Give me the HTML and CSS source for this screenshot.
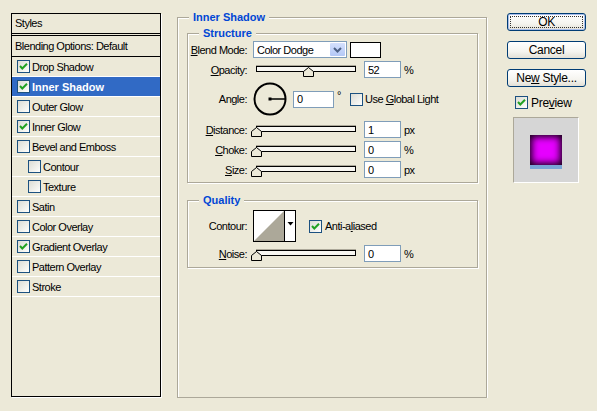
FILE: index.html
```html
<!DOCTYPE html>
<html>
    <head>
        <meta charset="utf-8">
        <title>Layer Style</title>
        <link rel="stylesheet" href="styles.css">
    </head>
    <body>
        <div class="dialog">
            <div class="styles-panel">
                <div class="styles-head">Styles</div>
                <div class="style-item blending">Blending Options: Default</div>
                <div class="style-item"><span class="check"><svg viewBox="0 0 11 11"><polyline points="2,5 4.3,7.5 9,2.8"/></svg></span>Drop Shadow</div>
                <div class="style-item selected"><span class="check"><svg viewBox="0 0 11 11"><polyline points="2,5 4.3,7.5 9,2.8"/></svg></span>Inner Shadow</div>
                <div class="style-item"><span class="check"></span>Outer Glow</div>
                <div class="style-item"><span class="check"><svg viewBox="0 0 11 11"><polyline points="2,5 4.3,7.5 9,2.8"/></svg></span>Inner Glow</div>
                <div class="style-item"><span class="check"></span>Bevel and Emboss</div>
                <div class="style-item sub"><span class="check"></span>Contour</div>
                <div class="style-item sub"><span class="check"></span>Texture</div>
                <div class="style-item"><span class="check"></span>Satin</div>
                <div class="style-item"><span class="check"></span>Color Overlay</div>
                <div class="style-item"><span class="check"><svg viewBox="0 0 11 11"><polyline points="2,5 4.3,7.5 9,2.8"/></svg></span>Gradient Overlay</div>
                <div class="style-item"><span class="check"></span>Pattern Overlay</div>
                <div class="style-item"><span class="check"></span>Stroke</div>
            </div>

            <div class="group outer">
                <span class="group-title">Inner Shadow</span>

                <div class="group structure">
                    <span class="group-title">Structure</span>

                    <div class="field-row">
                        <span class="label"><u>B</u>lend Mode:</span>
                        <div class="select">
                            <span class="select-text">Color Dodge</span>
                            <span class="drop"><svg width="15" height="13" viewBox="0 0 15 13"><polyline points="4,5 7.5,8.5 11,5"/></svg></span>
                        </div>
                        <span class="color-swatch"></span>
                    </div>

                    <div class="field-row gap3">
                        <span class="label"><u>O</u>pacity:</span>
                        <div class="slider">
                            <div class="track"></div>
                            <svg class="thumb" style="left:50px" width="11" height="10" viewBox="0 0 11 10"><polygon points="5.5,0.5 10.5,4.5 10.5,9.5 0.5,9.5 0.5,4.5"/></svg>
                        </div>
                        <input class="field" type="text" value="52">
                        <span class="unit">%</span>
                    </div>

                    <div class="field-row angle-row">
                        <span class="label"><u></u>Angle:</span>
                        <svg class="dial" width="34" height="34" viewBox="0 0 34 34">
                            <circle cx="17" cy="17" r="15.5"/>
                            <line x1="17" y1="17" x2="32" y2="17"/>
                            <rect x="15.5" y="15.5" width="3" height="3"/>
                        </svg>
                        <input class="field wide" type="text" value="0">
                        <span class="deg">°</span>
                        <span class="check blue"></span>
                        <span>Use <u>G</u>lobal Light</span>
                    </div>

                    <div class="field-row gap5">
                        <span class="label"><u>D</u>istance:</span>
                        <div class="slider">
                            <div class="track"></div>
                            <svg class="thumb" style="left:-2px" width="11" height="10" viewBox="0 0 11 10"><polygon points="5.5,0.5 10.5,4.5 10.5,9.5 0.5,9.5 0.5,4.5"/></svg>
                        </div>
                        <input class="field" type="text" value="1">
                        <span class="unit">px</span>
                    </div>

                    <div class="field-row gap3">
                        <span class="label"><u>C</u>hoke:</span>
                        <div class="slider">
                            <div class="track"></div>
                            <svg class="thumb" style="left:-2px" width="11" height="10" viewBox="0 0 11 10"><polygon points="5.5,0.5 10.5,4.5 10.5,9.5 0.5,9.5 0.5,4.5"/></svg>
                        </div>
                        <input class="field" type="text" value="0">
                        <span class="unit">%</span>
                    </div>

                    <div class="field-row gap3">
                        <span class="label"><u>S</u>ize:</span>
                        <div class="slider">
                            <div class="track"></div>
                            <svg class="thumb" style="left:-2px" width="11" height="10" viewBox="0 0 11 10"><polygon points="5.5,0.5 10.5,4.5 10.5,9.5 0.5,9.5 0.5,4.5"/></svg>
                        </div>
                        <input class="field" type="text" value="0">
                        <span class="unit">px</span>
                    </div>
                </div>

                <div class="group quality">
                    <span class="group-title">Quality</span>

                    <div class="field-row contour-row">
                        <span class="label">Contour:</span>
                        <svg class="contour" width="43" height="32" viewBox="0 0 43 32">
                            <rect x="0.5" y="0.5" width="42" height="31" fill="#fff" stroke="#000"/>
                            <polygon points="1,31 31,1 31,31" fill="#aca899"/>
                            <line x1="31.5" y1="1" x2="31.5" y2="31" stroke="#000"/>
                            <polygon points="34.5,12 40.5,12 37.5,15.5" fill="#000"/>
                        </svg>
                        <span class="check blue aa"><svg viewBox="0 0 11 11"><polyline points="2,5 4.3,7.5 9,2.8"/></svg></span>
                        <span>Anti-a<u>l</u>iased</span>
                    </div>

                    <div class="field-row gap3">
                        <span class="label"><u>N</u>oise:</span>
                        <div class="slider">
                            <div class="track"></div>
                            <svg class="thumb" style="left:-2px" width="11" height="10" viewBox="0 0 11 10"><polygon points="5.5,0.5 10.5,4.5 10.5,9.5 0.5,9.5 0.5,4.5"/></svg>
                        </div>
                        <input class="field" type="text" value="0">
                        <span class="unit">%</span>
                    </div>
                </div>
            </div>

            <div class="side">
                <div class="btn default">OK</div>
                <div class="btn">Cancel</div>
                <div class="btn">Ne<u>w</u> Style...</div>
                <div class="preview-toggle">
                    <span class="check blue"><svg viewBox="0 0 11 11"><polyline points="2,5 4.3,7.5 9,2.8"/></svg></span>
                    <span>Pre<u>v</u>iew</span>
                </div>
                <div class="preview">
                    <div class="preview-layer">
                        <div class="glow"></div>
                        <div class="glow-base"></div>
                    </div>
                </div>
            </div>
        </div>
    </body>
</html>
```

FILE: styles.css
```css
body {
    margin: 0;
    background: #ece9d8;
    font: 11px "Liberation Sans", Arial, sans-serif;
    letter-spacing: -0.5px;
    color: #000;
}

u {
    text-decoration: underline;
}

.dialog {
    display: flex;
    align-items: flex-start;
    padding: 13px 0 0 11px;
}

/* left list of effects */
.styles-panel {
    width: 150px;
    height: 384px;
    box-sizing: border-box;
    border: 1px solid #000;
    box-shadow: 1px 1px 0 #fff;
}

.styles-head {
    height: 19px;
    line-height: 19px;
    padding-left: 3px;
    border-bottom: 3px double #000;
}

.style-item {
    display: flex;
    align-items: center;
    height: 19px;
    padding-left: 5px;
    border-bottom: 1px solid #fff;
    white-space: nowrap;
}

.style-item.blending {
    height: 20px;
    padding-left: 3px;
    border-bottom-color: #000;
}

.style-item.sub {
    padding-left: 16px;
}

.style-item.selected {
    background: #316ac5;
    color: #fff;
    font-weight: bold;
    letter-spacing: 0;
}

.check {
    display: flex;
    flex: none;
    width: 13px;
    height: 13px;
    box-sizing: border-box;
    border: 1px solid #1c5180;
    background: linear-gradient(135deg, #dcdcd4, #f4f4f0 70%, #fff);
    margin-right: 2px;
}

.check svg {
    width: 11px;
    height: 11px;
}

.check polyline {
    fill: none;
    stroke: #21a121;
    stroke-width: 2;
}

/* group boxes */
.group {
    position: relative;
    box-sizing: border-box;
    border: 1px solid #aca899;
    box-shadow: inset 1px 1px 0 #fff, 1px 1px 0 #fff;
}

.group-title {
    position: absolute;
    top: -8px;
    left: 11px;
    padding: 0 4px;
    line-height: 14px;
    background: #ece9d8;
    color: #0046d5;
    font-weight: bold;
    letter-spacing: 0;
}

.outer {
    width: 310px;
    height: 381px;
    margin: 4px 0 0 16px;
    padding: 15px 0 0 9px;
}

.structure {
    width: 291px;
    height: 150px;
    padding-top: 7px;
}

.quality {
    width: 291px;
    height: 68px;
    margin-top: 17px;
    padding-top: 9px;
}

.field-row {
    display: flex;
    align-items: center;
    height: 17px;
    white-space: nowrap;
}

.gap3 {
    margin-top: 3px;
}

.gap5 {
    margin-top: 5px;
}

.label {
    flex: none;
    width: 59px;
    margin-right: 6px;
    text-align: right;
}

.select {
    display: flex;
    align-items: center;
    width: 94px;
    height: 17px;
    box-sizing: border-box;
    border: 1px solid #7f9db9;
    background: #fff;
    padding-left: 3px;
}

.select-text {
    flex: 1;
}

.drop {
    display: flex;
    width: 15px;
    height: 13px;
    margin-right: 1px;
    background: linear-gradient(#d4e0fc, #b4c8f6);
    border-radius: 1px;
}

.drop polyline {
    fill: none;
    stroke: #4d6185;
    stroke-width: 2;
}

.color-swatch {
    width: 31px;
    height: 16px;
    box-sizing: border-box;
    margin-left: 3px;
    border: 1px solid #000;
    background: #fff;
}

.slider {
    position: relative;
    flex: none;
    width: 106px;
    height: 17px;
}

.track {
    height: 6px;
    margin: 5px 3px 0;
    box-sizing: border-box;
    border: 1px solid #000;
    background: #f7f6f1;
    box-shadow: 0 -1px 0 #aca899;
}

.thumb {
    position: absolute;
    top: 6px;
}

.thumb polygon {
    fill: #ece9d8;
    stroke: #000;
}

.field {
    width: 37px;
    height: 17px;
    box-sizing: border-box;
    margin: 0 3px 0 5px;
    padding: 0 0 0 3px;
    border: 1px solid #7f9db9;
    background: #fff;
    font: inherit;
    letter-spacing: inherit;
    outline: none;
}

.field.wide {
    width: 41px;
    margin: 0 3px 0 6px;
}

.angle-row {
    height: 34px;
    margin-top: 4px;
}

.dial circle {
    fill: none;
    stroke: #000;
    stroke-width: 2;
}

.dial line {
    stroke: #000;
    stroke-width: 1.5;
}

.deg {
    width: 13px;
    margin-top: -8px;
}

.check.blue {
    border-color: #1c5180;
}

.contour-row {
    height: 32px;
}

.contour {
    flex: none;
}

.check.aa {
    margin-left: 13px;
    margin-right: 3px;
}

/* right hand buttons */
.side {
    display: flex;
    flex-direction: column;
    width: 79px;
    margin-left: 20px;
    font-size: 12px;
    letter-spacing: -0.3px;
}

.btn {
    position: relative;
    height: 18px;
    box-sizing: border-box;
    margin-bottom: 10px;
    border: 1px solid #003c74;
    border-radius: 3px;
    background: linear-gradient(#fff, #f5f4ef 60%, #e3e0d6);
    text-align: center;
    line-height: 16px;
}

.btn.default {
    box-shadow: inset 0 0 0 1px #a9bdea;
}

.btn.default::after {
    content: "";
    position: absolute;
    top: 2px;
    left: 2px;
    right: 2px;
    bottom: 2px;
    border: 1px dotted #333;
}

.preview-toggle {
    display: flex;
    align-items: center;
    height: 13px;
    margin: -1px 0 0 8px;
}

.preview-toggle .check {
    margin-right: 3px;
}

.preview {
    width: 66px;
    height: 66px;
    box-sizing: border-box;
    margin: 8px 0 0 6px;
    border: 1px solid;
    border-color: #aca899 #fff #fff #aca899;
    background: #d6d6d6;
}

.preview-layer {
    width: 32px;
    margin: 17px 0 0 16px;
}

.glow {
    height: 30px;
    background: #e600ff;
    box-shadow: inset 0 0 7px 2px #120012;
}

.glow-base {
    height: 4px;
    background: #7aa6d6;
}
```
